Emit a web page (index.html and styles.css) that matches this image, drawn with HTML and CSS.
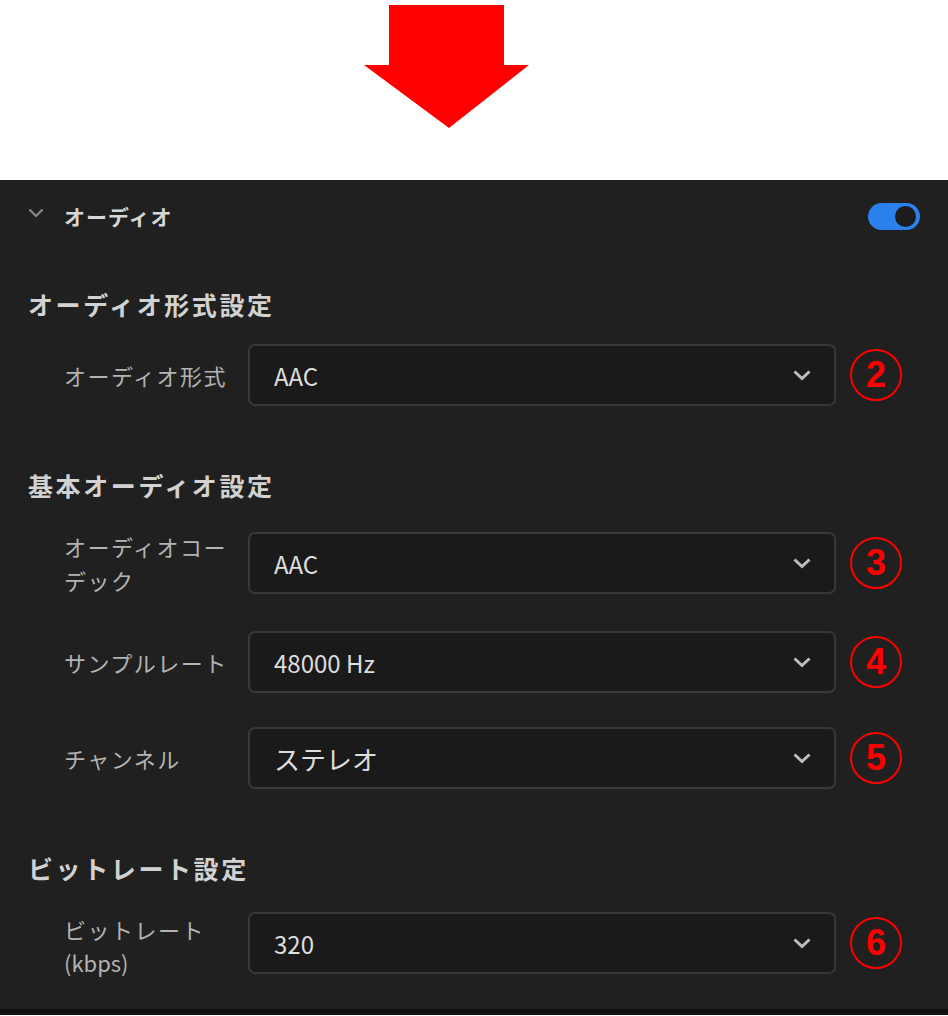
FILE: index.html
```html
<!DOCTYPE html>
<html lang="ja">
<head>
    <meta charset="UTF-8">
    <meta name="viewport" content="width=device-width, initial-scale=1.0">
    <title>オーディオ設定</title>
    <link rel="stylesheet" href="styles.css">
</head>
<body>
    <div class="arrow-area">
        <svg class="arrow" width="948" height="180" viewBox="0 0 948 180">
            <polygon points="389,5 504,5 504,65 529,65 449,128 364,65 389,65" fill="#ff0000"/>
        </svg>
    </div>

    <div class="panel">
        <div class="panel-header">
            <div class="header-title">
                <svg class="caret" width="16" height="10" viewBox="0 0 16 10">
                    <polyline points="1.5,1.5 8,8 14.5,1.5" fill="none" stroke="#8a8a8a" stroke-width="2.2"/>
                </svg>
                <span>オーディオ</span>
            </div>
            <div class="toggle"><span class="knob"></span></div>
        </div>

        <h2 class="section-title first">オーディオ形式設定</h2>
        <div class="row">
            <div class="label">オーディオ形式</div>
            <div class="select">
                <span class="value">AAC</span>
                <svg class="chev" width="20" height="12" viewBox="0 0 20 12"><polyline points="2.5,2.5 10,9.5 17.5,2.5" fill="none" stroke="#bdbdbd" stroke-width="3"/></svg>
            </div>
            <div class="num">2</div>
        </div>

        <h2 class="section-title">基本オーディオ設定</h2>
        <div class="row">
            <div class="label">オーディオコーデック</div>
            <div class="select">
                <span class="value">AAC</span>
                <svg class="chev" width="20" height="12" viewBox="0 0 20 12"><polyline points="2.5,2.5 10,9.5 17.5,2.5" fill="none" stroke="#bdbdbd" stroke-width="3"/></svg>
            </div>
            <div class="num">3</div>
        </div>
        <div class="row">
            <div class="label">サンプルレート</div>
            <div class="select">
                <span class="value">48000 Hz</span>
                <svg class="chev" width="20" height="12" viewBox="0 0 20 12"><polyline points="2.5,2.5 10,9.5 17.5,2.5" fill="none" stroke="#bdbdbd" stroke-width="3"/></svg>
            </div>
            <div class="num">4</div>
        </div>
        <div class="row">
            <div class="label">チャンネル</div>
            <div class="select">
                <span class="value jp">ステレオ</span>
                <svg class="chev" width="20" height="12" viewBox="0 0 20 12"><polyline points="2.5,2.5 10,9.5 17.5,2.5" fill="none" stroke="#bdbdbd" stroke-width="3"/></svg>
            </div>
            <div class="num">5</div>
        </div>

        <h2 class="section-title">ビットレート設定</h2>
        <div class="row">
            <div class="label">ビットレート<span class="unit">(kbps)</span></div>
            <div class="select">
                <span class="value">320</span>
                <svg class="chev" width="20" height="12" viewBox="0 0 20 12"><polyline points="2.5,2.5 10,9.5 17.5,2.5" fill="none" stroke="#bdbdbd" stroke-width="3"/></svg>
            </div>
            <div class="num">6</div>
        </div>
    </div>
</body>
</html>
```

FILE: styles.css
```css
body {
    margin: 0;
    background: #ffffff;
    font-family: "Noto Sans CJK JP", "Noto Sans", sans-serif;
}
.arrow-area {
    height: 180px;
}
.arrow {
    display: block;
}
.panel {
    background: #202020;
    padding: 0 0 35px 0;
    border-bottom: 6px solid #101010;
}
.panel-header {
    height: 72px;
    display: flex;
    align-items: center;
    justify-content: space-between;
    padding: 0 28px;
}
.header-title {
    display: flex;
    align-items: center;
    gap: 20px;
    color: #d6d6d6;
    font-size: 21px;
    letter-spacing: 1px;
    font-weight: 700;
}
.caret {
    margin-top: -6px;
}
.toggle {
    position: relative;
    width: 52px;
    height: 27px;
    border-radius: 14px;
    background: #2c82ec;
}
.knob {
    position: absolute;
    right: 4px;
    top: 3px;
    width: 21px;
    height: 21px;
    border-radius: 50%;
    background: #1d1d1d;
}
.section-title {
    margin: 61px 0 26px 28px;
    font-size: 25px;
    line-height: 36px;
    letter-spacing: 2.6px;
    font-weight: 700;
    color: #d2d2d2;
}
.section-title.first {
    margin-top: 34px;
    margin-bottom: 22px;
}
.row {
    display: flex;
    align-items: center;
    padding-left: 64px;
    margin-bottom: 34px;
}
.row:last-child {
    margin-bottom: 0;
}
.label {
    width: 184px;
    flex-shrink: 0;
    padding-right: 8px;
    box-sizing: border-box;
    font-size: 22px;
    line-height: 34px;
    letter-spacing: 1.5px;
    color: #b3b3b3;
}
.unit {
    display: block;
    margin-top: 4px;
    line-height: 24px;
    letter-spacing: 0;
}
.select {
    width: 588px;
    height: 62px;
    box-sizing: border-box;
    display: flex;
    align-items: center;
    justify-content: space-between;
    padding: 0 22px 0 24px;
    background: #1a1a1a;
    border: 2px solid #383838;
    border-radius: 7px;
}
.value {
    font-size: 24px;
    color: #dedede;
}
.value.jp {
    font-size: 26px;
}
.num {
    width: 48px;
    height: 48px;
    margin-left: 14px;
    border: 2px solid #ff0000;
    border-radius: 50%;
    display: flex;
    align-items: center;
    justify-content: center;
    color: #ff0000;
    font-family: "Liberation Sans", sans-serif;
    font-weight: 700;
    font-size: 36px;
}
```
